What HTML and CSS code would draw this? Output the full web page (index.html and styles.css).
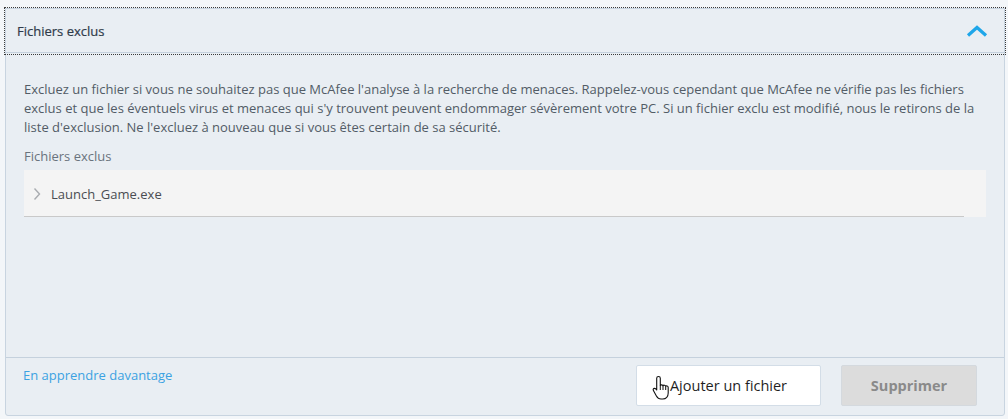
FILE: index.html
```html
<!DOCTYPE html>
<html lang="fr">
<head>
<meta charset="utf-8">
<title>Fichiers exclus</title>
<link rel="stylesheet" href="styles.css">
</head>
<body>
<div class="panel">
  <div class="header">
    <span class="title">Fichiers exclus</span>
    <svg class="chev-up" width="22" height="12" viewBox="0 0 22 12"><path d="M2 10.5 L11 2.5 L20 10.5" fill="none" stroke="#1ea6e9" stroke-width="3.2" stroke-linejoin="miter"/></svg>
  </div>
  <div class="content">
    <p class="desc">Excluez un fichier si vous ne souhaitez pas que McAfee l'analyse à la recherche de menaces. Rappelez-vous cependant que McAfee ne vérifie pas les fichiers exclus et que les éventuels virus et menaces qui s'y trouvent peuvent endommager sévèrement votre PC. Si un fichier exclu est modifié, nous le retirons de la liste d'exclusion. Ne l'excluez à nouveau que si vous êtes certain de sa sécurité.</p>
    <div class="label">Fichiers exclus</div>
    <div class="row">
      <svg class="chev-right" width="8" height="14" viewBox="0 0 8 14"><path d="M1.5 1.5 L6.5 7 L1.5 12.5" fill="none" stroke="#a9acb0" stroke-width="1.4"/></svg>
      <span class="fname">Launch_Game.exe</span>
    </div>
  </div>
  <div class="footer">
    <a class="link" href="#">En apprendre davantage</a>
    <div class="buttons">
      <button class="btn btn-add">Ajouter un fichier</button>
      <button class="btn btn-del">Supprimer</button>
    </div>
    <svg class="cursor" width="20" height="26" viewBox="0 0 20 26"><path d="M6.5 1.5 C7.6 1.5 8.3 2.2 8.3 3.3 L8.3 10.5 C8.6 9.6 10.8 9.6 11 10.8 C11.4 9.9 13.4 9.9 13.7 11.3 C14.2 10.6 16.2 10.8 16.2 12.4 L16.2 18 C16.2 21.5 14 24 10.8 24 L9 24 C6.8 24 5.4 22.8 4.4 21 L1.4 15.5 C0.8 14.4 1.4 13.5 2.4 13.4 C3.3 13.3 4 13.9 4.7 15 L4.7 3.3 C4.7 2.2 5.4 1.5 6.5 1.5 Z" fill="#ffffff" stroke="#111" stroke-width="1.1" stroke-linejoin="round"/><path d="M8.3 10.5 L8.3 15 M11 10.8 L11 15 M13.7 11.3 L13.7 15" stroke="#111" stroke-width="1" fill="none"/></svg>
  </div>
</div>
</body>
</html>
```

FILE: styles.css
```css
* { box-sizing: border-box; }
html, body { margin: 0; padding: 0; }
body {
  background: #f3f6f9;
  font-family: "Open Sans", "Liberation Sans", sans-serif;
  font-size: 13px;
  color: #505a64;
  width: 1008px;
  height: 419px;
  overflow: hidden;
}
.panel {
  margin: 8px 0 0 5px;
  width: 1000px;
  height: 408px;
  background: #e9eef3;
  border: 1px solid #c8d4e0;
  border-radius: 0 0 3px 3px;
  display: flex;
  flex-direction: column;
  position: relative;
}
.header {
  flex: none;
  display: flex;
  align-items: center;
  justify-content: space-between;
  padding: 0 16px 0 11px;
  border-bottom: 1px solid #c5d1dd;
  outline: 1px dotted #3a3a3a;
  outline-offset: 1px;
  height: 44px;
}
.title {
  font-size: 13px;
  font-weight: 400;
  color: #2f3b4a;
  margin-top: 1px;
  -webkit-text-stroke: 0.2px #2f3b4a;
}
.chev-up { display: block; }
.content {
  flex: 1;
  padding: 27px 17px 0 18px;
}
.desc {
  margin: 0;
  line-height: 19px;
  color: #525c66;
  padding-right: 2px;
}
.label {
  margin-top: 10px;
  line-height: 19px;
  color: #69737d;
}
.row {
  margin-top: 4px;
  height: 47px;
  width: 962px;
  background: #f4f4f4;
  display: flex;
  align-items: center;
  padding-left: 9px;
  position: relative;
}
.row::after {
  content: "";
  position: absolute;
  left: 0;
  bottom: 0;
  width: 940px;
  height: 1px;
  background: #c9c9c9;
}
.chev-right { display: block; margin-right: 10px; }
.fname { color: #4a4d52; }
.footer {
  height: 58px;
  flex: none;
  border-top: 1px solid #c5d1dd;
  display: flex;
  justify-content: space-between;
  padding: 7px 27px 0 17px;
  position: relative;
}
.link {
  color: #3ba2e2;
  text-decoration: none;
  line-height: 19px;
  margin-top: 1px;
}
.buttons {
  display: flex;
  gap: 20px;
}
.btn {
  height: 41px;
  font-family: "Open Sans", "Liberation Sans", sans-serif;
  font-size: 14.5px;
  border-radius: 2px;
  padding: 0;
}
.btn-add {
  width: 185px;
  background: #ffffff;
  border: 1px solid #d3dde7;
  color: #1f1f1f;
}
.btn-del {
  width: 136px;
  background: #dcdcdc;
  border: 1px solid #d4d9de;
  color: #8a8a8a;
  font-weight: 700;
}
.cursor {
  position: absolute;
  left: 646px;
  top: 17px;
}
```
